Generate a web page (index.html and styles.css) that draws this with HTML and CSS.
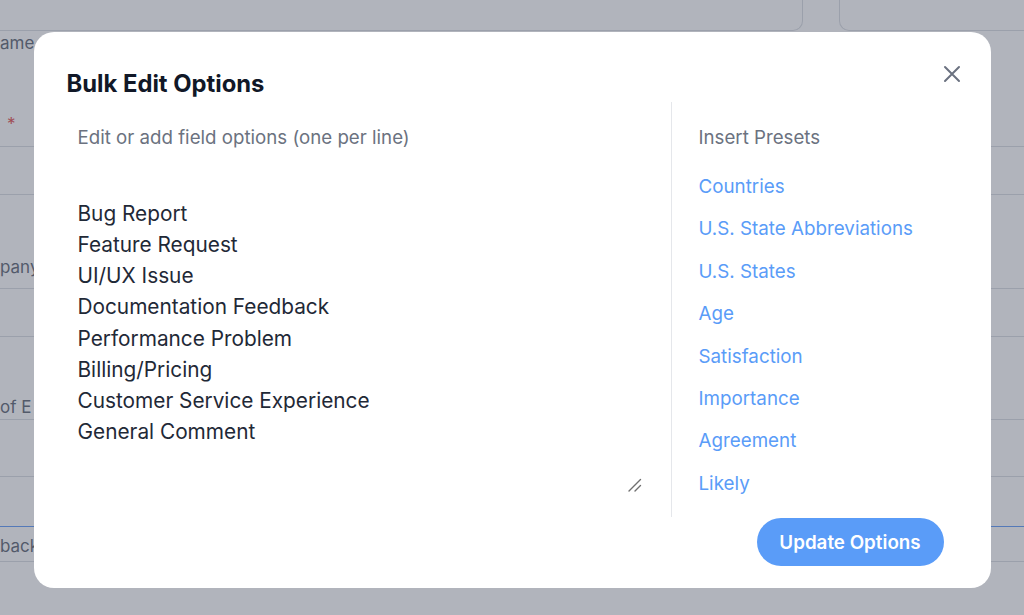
FILE: index.html
```html
<!DOCTYPE html>
<html lang="en">
  <head>
    <meta charset="UTF-8" />
    <meta name="viewport" content="width=device-width, initial-scale=1.0" />
    <title>Bulk Edit Options</title>
    <link rel="stylesheet" href="styles.css">
  </head>
  <body>
    <div class="page">
      <div class="row row-top">
        <div class="field-box box-left"></div>
        <div class="field-box box-right"></div>
      </div>
      <div class="row row-a"><span class="bg-label">ame</span><span class="req">*</span></div>
      <div class="row row-b"></div>
      <div class="row row-c"><span class="bg-label">pany</span></div>
      <div class="row row-d"></div>
      <div class="row row-e"><span class="bg-label">of E</span></div>
      <div class="row row-f"></div>
      <div class="row row-g focused"></div>
      <div class="row row-h"><span class="bg-label">back</span></div>
    </div>

    <div class="overlay">
      <div class="modal">
        <h2 class="modal-title">Bulk Edit Options</h2>
        <button class="close-btn" type="button" aria-label="Close">
          <svg width="18" height="18" viewBox="0 0 18 18" fill="none" stroke="#6b7280" stroke-width="2" stroke-linecap="round">
            <path d="M2 2L16 16M16 2L2 16" />
          </svg>
        </button>

        <div class="modal-body">
          <div class="edit-col">
            <label class="col-label" for="options">Edit or add field options (one per line)</label>
            <div class="text-wrap">
              <textarea id="options" class="options-text">Bug Report
Feature Request
UI/UX Issue
Documentation Feedback
Performance Problem
Billing/Pricing
Customer Service Experience
General Comment</textarea>
              <svg class="grip" width="14" height="14" viewBox="0 0 14 14" fill="none" stroke="#707070" stroke-width="1.4" stroke-linecap="round">
                <path d="M1 13L12.5 1.5M7 13L12.5 7.5" />
              </svg>
            </div>
          </div>
          <div class="preset-col">
            <div class="col-label">Insert Presets</div>
            <ul class="preset-list">
              <li><a href="#">Countries</a></li>
              <li><a href="#">U.S. State Abbreviations</a></li>
              <li><a href="#">U.S. States</a></li>
              <li><a href="#">Age</a></li>
              <li><a href="#">Satisfaction</a></li>
              <li><a href="#">Importance</a></li>
              <li><a href="#">Agreement</a></li>
              <li><a href="#">Likely</a></li>
            </ul>
          </div>
        </div>

        <div class="modal-footer">
          <button class="update-btn" type="button">Update Options</button>
        </div>
      </div>
    </div>
  </body>
</html>
```

FILE: styles.css
```css
body {
  margin: 0;
  font-family: Inter, "Noto Sans", Arial, sans-serif;
  background-color: #ffffff;
  height: 615px;
  overflow: hidden;
}

/* page behind the dialog */
.page {
  display: flex;
  flex-direction: column;
}

.row {
  position: relative;
  border-bottom: 1px solid #d1d5db;
  box-sizing: border-box;
}

.row-top {
  height: 31px;
  border-bottom: none;
  display: flex;
  gap: 36px;
}

.field-box {
  height: 31px;
  border: 1px solid #d1d5db;
  border-top: none;
  box-sizing: border-box;
}

.box-left {
  width: 803px;
  border-left: none;
  border-radius: 0 0 10px 0;
}

.box-right {
  flex: 1;
  border-right: none;
  border-radius: 0 0 0 10px;
}

.row-a {
  height: 116px;
}

.row-b {
  height: 48px;
}

.row-c {
  height: 94px;
}

.row-d {
  height: 48px;
}

.row-e {
  height: 83px;
}

.row-f {
  height: 57px;
}

.row-g {
  height: 50px;
}

.row-g.focused {
  border-bottom-color: #3b82f6;
}

.row-h {
  height: 35px;
}

.bg-label {
  position: absolute;
  left: 0;
  bottom: 4px;
  font-size: 17px;
  line-height: 22px;
  color: #374151;
  white-space: nowrap;
}

.row-a .bg-label {
  top: 1px;
  bottom: auto;
}

.row-c .bg-label {
  bottom: 10px;
}

.row-e .bg-label {
  bottom: 1px;
}

.req {
  position: absolute;
  left: 7px;
  top: 83px;
  color: #dc2626;
  font-size: 17px;
}

.overlay {
  position: fixed;
  inset: 0;
  background-color: rgba(107, 114, 128, 0.53);
  display: flex;
  justify-content: center;
  align-items: flex-start;
  padding-top: 32px;
}

.modal {
  position: relative;
  width: 957px;
  height: 556px;
  box-sizing: border-box;
  padding: 38px 47px 22px 33px;
  background-color: white;
  border-radius: 20px;
  display: flex;
  flex-direction: column;
}

.modal-title {
  margin: 0;
  font-size: 23.8px;
  line-height: 28px;
  font-weight: 700;
  color: #111827;
}

.close-btn {
  position: absolute;
  top: 29px;
  right: 26px;
  width: 26px;
  height: 26px;
  padding: 4px;
  border: none;
  background: none;
  cursor: pointer;
}

.modal-body {
  display: flex;
  height: 415px;
  margin-top: 4px;
}

.edit-col {
  width: 578px;
  padding-right: 26px;
  border-right: 1px solid #e5e7eb;
  display: flex;
  flex-direction: column;
}

.col-label {
  display: block;
  margin-top: 24px;
  font-size: 18.7px;
  line-height: 24px;
  color: #6b7280;
}

.edit-col .col-label {
  padding-left: 11px;
}

.text-wrap {
  position: relative;
  margin-top: 36px;
  height: 308px;
}

.options-text {
  width: 100%;
  height: 100%;
  padding: 12px 11px;
  border: none;
  outline: none;
  resize: none;
  font-family: Inter, "Noto Sans", Arial, sans-serif;
  font-size: 20.8px;
  line-height: 31.14px;
  color: #1f2937;
  background: white;
  box-sizing: border-box;
}

.grip {
  position: absolute;
  right: 3px;
  bottom: 2px;
}

.preset-col {
  flex: 1;
  padding-left: 27px;
}

.preset-list {
  list-style: none;
  margin: 25px 0 0;
  padding: 0;
  display: flex;
  flex-direction: column;
  gap: 18.4px;
}

.preset-list li {
  line-height: 24px;
}

.preset-list a {
  font-size: 18.8px;
  line-height: 24px;
  color: #5a9cf8;
  text-decoration: none;
}

.modal-footer {
  display: flex;
  justify-content: flex-end;
  margin-top: 1px;
}

.update-btn {
  height: 48px;
  width: 187px;
  padding: 0;
  border: none;
  border-radius: 24px;
  background-color: #5a9cf8;
  color: white;
  font-family: Inter, "Noto Sans", Arial, sans-serif;
  font-size: 18.8px;
  font-weight: 600;
  cursor: pointer;
}

.update-btn:hover {
  background-color: #3b82f6;
}
```
